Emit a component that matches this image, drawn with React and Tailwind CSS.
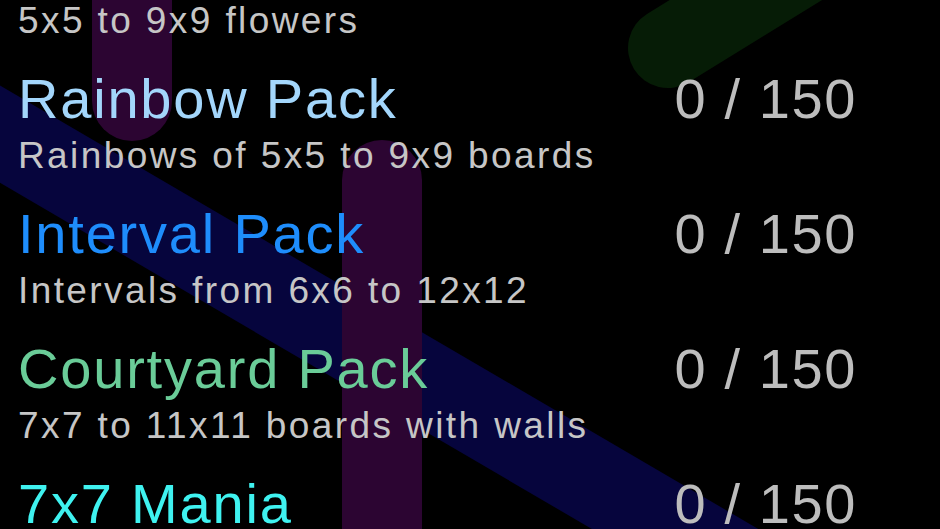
import React from "react";

const packs = [
  { title: "Flower Pack", sub: "5x5 to 9x9 flowers", color: "text-[#e48cff]" },
  { title: "Rainbow Pack", sub: "Rainbows of 5x5 to 9x9 boards", color: "text-[#a3d6fb]" },
  { title: "Interval Pack", sub: "Intervals from 6x6 to 12x12", color: "text-[#1e8dfc]" },
  { title: "Courtyard Pack", sub: "7x7 to 11x11 boards with walls", color: "text-[#6acc98]" },
  { title: "7x7 Mania", sub: "", color: "text-[#3ff2f0]" },
];

function Background() {
  return (
    <svg className="absolute inset-0" width="940" height="529" viewBox="0 0 940 529">
      <line x1="132" y1="-120" x2="132" y2="101" stroke="#2c0532" strokeWidth="80" strokeLinecap="round" />
      <line x1="-120" y1="64" x2="1000" y2="719" stroke="#06053d" strokeWidth="84" />
      <line x1="382" y1="180" x2="382" y2="700" stroke="#2c0532" strokeWidth="80" strokeLinecap="round" />
      <line x1="668" y1="48" x2="900" y2="-95" stroke="#061c06" strokeWidth="80" strokeLinecap="round" />
    </svg>
  );
}

export default function App() {
  return (
    <div className="relative w-[940px] h-[529px] overflow-hidden bg-black font-['Liberation_Sans',Arial,sans-serif]">
      <Background />
      <div className="relative flex flex-col -mt-[64px]">
        {packs.map((p) => (
          <div key={p.title} className="flex h-[135px] shrink-0 justify-between pl-[18px] pr-[83px]">
            <div className="flex flex-col">
              <div className={`h-[56px] text-[56px] leading-[56px] tracking-[1.8px] whitespace-nowrap ${p.color}`}>
                {p.title}
              </div>
              <div className="h-[58px] text-[37px] leading-[58px] tracking-[2.4px] text-[#c6c6c6] whitespace-nowrap">
                {p.sub}
              </div>
            </div>
            <div className="h-[56px] text-[56px] leading-[56px] tracking-[1.6px] text-[#bdbdbd] whitespace-nowrap">
              0 / 150
            </div>
          </div>
        ))}
      </div>
    </div>
  );
}
